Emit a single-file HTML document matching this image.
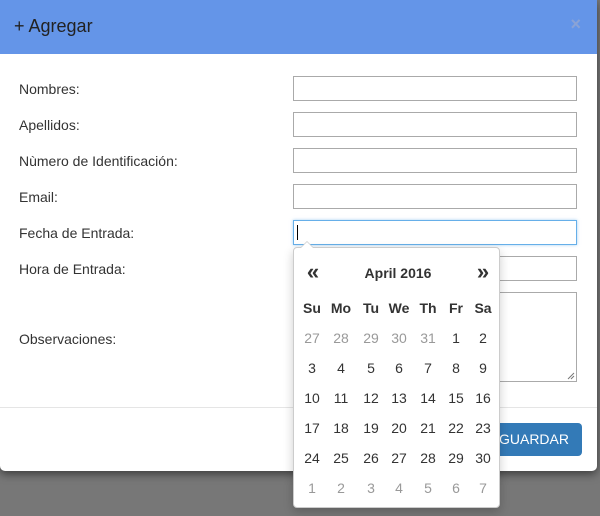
<!DOCTYPE html>
<html><head><style>
body{margin:0;width:600px;height:516px;background:#777;position:relative;overflow:hidden;font-family:"Liberation Sans",sans-serif;}
.modal{position:absolute;left:0;top:0;width:597px;height:471px;background:#fff;border-radius:0 0 5px 5px;box-shadow:0 3px 9px rgba(0,0,0,.5);}
.hdr{height:54px;background:#6495e8;position:relative;}
.hdr h4{margin:0;position:absolute;left:14px;top:16px;font-size:18px;font-weight:normal;color:#222;}
.x{position:absolute;right:16px;top:14px;font-size:18px;color:#8aa3d6;font-weight:bold;}
.lbl{position:absolute;left:19px;font-size:14px;color:#333;}
.in{position:absolute;left:293px;width:282px;height:23px;border:1px solid #aaa;background:#fff;}
.line{position:absolute;left:0;right:0;top:407px;border-top:1px solid #e5e5e5;}
.btn{position:absolute;left:482px;top:423px;width:100px;height:33px;background:#337ab7;border-radius:4px;color:#fff;font-size:14px;line-height:33px;text-align:right;box-sizing:border-box;padding-right:13px;}
.cal{position:absolute;left:293px;top:247px;width:207px;height:261px;background:#fff;border:1px solid #ccc;border-radius:4px;box-shadow:0 4px 10px rgba(0,0,0,.2);box-sizing:border-box;}
.cal:before{content:"";position:absolute;left:6px;top:-7px;border:7px solid transparent;border-top:0;border-bottom-color:#ccc;}
.cal:after{content:"";position:absolute;left:7px;top:-6px;border:6px solid transparent;border-top:0;border-bottom-color:#fff;}
.c{position:absolute;width:30px;text-align:center;font-size:14px;color:#333;transform:translateX(-15px);}
.g{color:#999;}
.b{font-weight:bold;}
.arr{font-size:22px;}
</style></head><body>
<div class="modal">
<div class="hdr"><h4>+ Agregar</h4><span class="x">×</span></div>
<div class="lbl" style="top:81px">Nombres:</div>
<div class="lbl" style="top:117px">Apellidos:</div>
<div class="lbl" style="top:153px">Nùmero de Identificación:</div>
<div class="lbl" style="top:189px">Email:</div>
<div class="lbl" style="top:225px">Fecha de Entrada:</div>
<div class="lbl" style="top:261px">Hora de Entrada:</div>
<div class="lbl" style="top:331px">Observaciones:</div>
<div class="in" style="top:76px"></div>
<div class="in" style="top:112px"></div>
<div class="in" style="top:148px"></div>
<div class="in" style="top:184px"></div>
<div class="in" style="top:220px;border-color:#66afe9;box-shadow:0 0 3px rgba(102,175,233,.6)"><div style="position:absolute;left:3px;top:4px;width:1px;height:15px;background:#000"></div></div>
<div class="in" style="top:256px"></div>
<div class="in" style="top:292px;height:88px"><svg style="position:absolute;right:1px;bottom:1px" width="8" height="8"><path d="M1 7L7 1M4 7L7 4" stroke="#777" stroke-width="1"/></svg></div>
<div class="line"></div>
<div class="btn">GUARDAR</div>
</div>
<div class="cal" id="cal"></div>
<script>
var cal=document.getElementById('cal');
var xs=[18,47,77,105,134,162,189];
function add(x,y,t,cls){var d=document.createElement('div');d.className='c '+(cls||'');d.style.left=x+'px';d.style.top=y+'px';d.textContent=t;cal.appendChild(d);}
add(19,11,'«','b arr');add(189,11,'»','b arr');
var m=document.createElement('div');m.className='c b';m.style.left='104px';m.style.top='17px';m.style.width='100px';m.style.transform='translateX(-50px)';m.textContent='April 2016';cal.appendChild(m);
var dw=['Su','Mo','Tu','We','Th','Fr','Sa'];
dw.forEach(function(t,i){add(xs[i],52,t,'b');});
var days=[27,28,29,30,31];for(var i=1;i<=30;i++)days.push(i);for(i=1;i<=7;i++)days.push(i);
days.forEach(function(d,i){var r=Math.floor(i/7),c=i%7;var g=(i<5||i>=35);add(xs[c],82+r*30,d,g?'g':'');});
</script>
</body></html>
